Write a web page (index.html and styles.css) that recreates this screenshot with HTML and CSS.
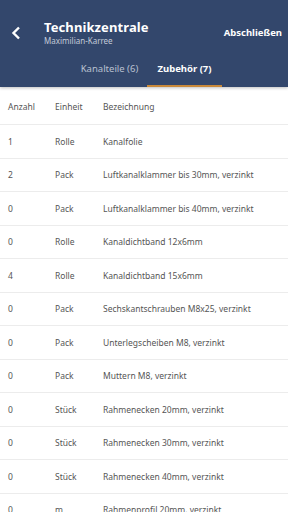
FILE: index.html
```html
<!DOCTYPE html>
<html lang="de">
<head>
    <meta charset="UTF-8">
    <meta name="viewport" content="width=device-width, initial-scale=1.0">
    <link rel="stylesheet" href="styles.css">
</head>
<body>
    <div class="app-bar">
        <div class="top-row">
            <div class="back">
                <svg width="12" height="14" viewBox="0 0 12 14"><path d="M9 1.5 L3.5 7 L9 12.5" fill="none" stroke="#fff" stroke-width="2.4"/></svg>
            </div>
            <div class="titles">
                <div class="title">Technikzentrale</div>
                <div class="subtitle">Maximilian-Karree</div>
            </div>
            <div class="action">Abschließen</div>
        </div>
        <div class="tabs">
            <div class="tab">Kanalteile (6)</div>
            <div class="tab active">Zubehör (7)</div>
        </div>
    </div>

    <div class="table">
        <div class="row head">
            <span class="c1">Anzahl</span><span class="c2">Einheit</span><span class="c3">Bezeichnung</span>
        </div>
        <div class="row"><span class="c1">1</span><span class="c2">Rolle</span><span class="c3">Kanalfolie</span></div>
        <div class="row"><span class="c1">2</span><span class="c2">Pack</span><span class="c3">Luftkanalklammer bis 30mm, verzinkt</span></div>
        <div class="row"><span class="c1">0</span><span class="c2">Pack</span><span class="c3">Luftkanalklammer bis 40mm, verzinkt</span></div>
        <div class="row"><span class="c1">0</span><span class="c2">Rolle</span><span class="c3">Kanaldichtband 12x6mm</span></div>
        <div class="row"><span class="c1">4</span><span class="c2">Rolle</span><span class="c3">Kanaldichtband 15x6mm</span></div>
        <div class="row"><span class="c1">0</span><span class="c2">Pack</span><span class="c3">Sechskantschrauben M8x25, verzinkt</span></div>
        <div class="row"><span class="c1">0</span><span class="c2">Pack</span><span class="c3">Unterlegscheiben M8, verzinkt</span></div>
        <div class="row"><span class="c1">0</span><span class="c2">Pack</span><span class="c3">Muttern M8, verzinkt</span></div>
        <div class="row"><span class="c1">0</span><span class="c2">Stück</span><span class="c3">Rahmenecken 20mm, verzinkt</span></div>
        <div class="row"><span class="c1">0</span><span class="c2">Stück</span><span class="c3">Rahmenecken 30mm, verzinkt</span></div>
        <div class="row"><span class="c1">0</span><span class="c2">Stück</span><span class="c3">Rahmenecken 40mm, verzinkt</span></div>
        <div class="row"><span class="c1">0</span><span class="c2">m</span><span class="c3">Rahmenprofil 20mm, verzinkt</span></div>
    </div>
</body>
</html>
```

FILE: styles.css
```css
body {
    margin: 0;
    padding: 0;
    height: 512px;
    overflow: hidden;
    background-color: #ffffff;
    font-family: "Noto Sans", sans-serif;
}

.app-bar {
    background-color: #33476c;
    color: #ffffff;
    height: 87px;
    box-shadow: 0 1px 3px rgba(0, 0, 0, 0.25);
    display: flex;
    flex-direction: column;
}

.top-row {
    display: flex;
    align-items: center;
    height: 60px;
    padding-top: 5px;
    box-sizing: border-box;
}

.back {
    width: 44px;
    padding-left: 10px;
    box-sizing: border-box;
    display: flex;
    align-items: center;
}

.titles {
    flex: 1;
}

.title {
    font-size: 13px;
    font-weight: bold;
    line-height: 17px;
    letter-spacing: 0.1px;
}

.subtitle {
    font-size: 8px;
    color: #c3cbd9;
    line-height: 10px;
}

.action {
    font-size: 9.5px;
    font-weight: bold;
    padding-right: 6px;
}

.tabs {
    display: flex;
    height: 27px;
    padding-left: 72px;
}

.tab {
    font-size: 9.5px;
    color: #b9c1d0;
    width: 75px;
    text-align: center;
    box-sizing: border-box;
    padding-top: 2px;
}

.tab.active {
    color: #ffffff;
    font-weight: bold;
    border-bottom: 2px solid #c9893a;
}

.table {
    display: flex;
    flex-direction: column;
}

.row {
    display: flex;
    align-items: center;
    height: 33.5px;
    border-bottom: 1.5px solid #ececec;
    box-sizing: border-box;
    font-size: 8.5px;
    color: #555555;
    padding-left: 8px;
}

.row.head {
    height: 38px;
    padding-top: 1px;
}

.c1 {
    width: 47px;
}

.c2 {
    width: 48px;
}

.c3 {
    flex: 1;
}
```
